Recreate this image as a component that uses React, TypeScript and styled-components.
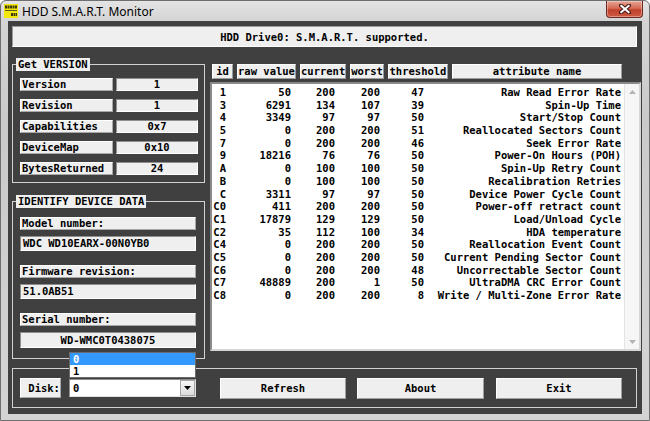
import React from "react";
import styled, { createGlobalStyle } from "styled-components";

const MONO = `"DejaVu Sans Mono", "Liberation Mono", monospace`;

const GlobalStyle = createGlobalStyle`
  html, body { margin: 0; padding: 0; background: #ffffff; }
  body { font-family: ${MONO}; }
  * { box-sizing: border-box; }
`;

const Window = styled.div`
  width: 650px;
  height: 421px;
  display: flex;
  flex-direction: column;
  padding: 0 7px 6px 7px;
  background: linear-gradient(180deg, #e4e4e4 0px, #d4d4d4 20px, #cacaca 120px, #d4d4d4 421px);
  border: 1px solid #6f6f6f;
  border-radius: 6px 6px 0 0;
  overflow: hidden;
`;

const TitleBar = styled.div`
  height: 21px;
  display: flex;
  align-items: flex-start;
  margin: 0 -1px 0 -4px;
`;

const AppIcon = styled.svg`
  width: 14px;
  height: 14px;
  margin: 3px 4px 0 0;
  flex: none;
`;

const TitleText = styled.span`
  font-family: "Noto Sans", "Open Sans", sans-serif;
  font-size: 12px;
  line-height: 14px;
  margin-top: 4px;
  color: #000;
  white-space: nowrap;
`;

const CloseButton = styled.div`
  margin-left: auto;
  width: 37px;
  height: 17px;
  display: flex;
  align-items: center;
  justify-content: center;
  background: linear-gradient(180deg, #e6a595 0%, #d46a56 45%, #c0412c 55%, #cc5a44 100%);
  border: 1px solid #6e2a20;
  border-top: none;
  border-radius: 0 0 4px 4px;
  box-shadow: inset 0 0 0 1px rgba(255, 255, 255, 0.35);
`;

const Client = styled.div`
  flex: 1;
  display: flex;
  flex-direction: column;
  background: #404040;
  padding: 5px 5px 6px 4px;
  color: #000;
  font-family: ${MONO};
  font-weight: bold;
  font-size: 10.5px;
`;

const StatusBox = styled.div`
  height: 21px;
  display: flex;
  align-items: center;
  justify-content: center;
  background: #efefef;
  border: 1px solid;
  border-color: #9a9a9a #ffffff #ffffff #9a9a9a;
  white-space: pre;
`;

const Middle = styled.div`
  display: flex;
  gap: 5px;
  margin-top: 11px;
  height: 302px;
`;

const LeftCol = styled.div`
  width: 193px;
  flex: none;
  display: flex;
  flex-direction: column;
  gap: 12px;
`;

const Group = styled.fieldset<{ $pt: number; $pr: number; $pb: number }>`
  margin: 0;
  min-width: 0;
  padding: ${(p) => p.$pt}px ${(p) => p.$pr}px ${(p) => p.$pb}px 7px;
  border: 1px solid #d2d2d2;
`;

const Legend = styled.legend`
  padding: 0 2px;
  margin-left: -4px;
  background: #efefef;
  line-height: 13px;
  height: 13px;
  white-space: pre;
`;

const Stack = styled.div<{ $gap: number }>`
  display: flex;
  flex-direction: column;
  gap: ${(p) => p.$gap}px;
`;

const InfoRow = styled.div`
  display: flex;
  gap: 3px;
`;

const LabelBox = styled.div<{ $w?: number; $h?: number }>`
  ${(p) => (p.$w ? `width: ${p.$w}px; flex: none;` : "flex: 1;")}
  height: ${(p) => p.$h ?? 13}px;
  line-height: ${(p) => (p.$h ?? 13) - 2}px;
  background: #efefef;
  border: 1px solid;
  border-color: #ffffff #a8a8a8 #a8a8a8 #ffffff;
  padding-left: 1px;
  white-space: pre;
  overflow: hidden;
`;

const ValueBox = styled.div<{ $h?: number; $align?: string }>`
  flex: 1;
  height: ${(p) => p.$h ?? 13}px;
  line-height: ${(p) => (p.$h ?? 13) - 2}px;
  background: #efefef;
  border: 1px solid;
  border-color: #8e8e8e #ffffff #ffffff #8e8e8e;
  text-align: ${(p) => p.$align ?? "center"};
  padding-left: ${(p) => (p.$align === "left" ? 2 : 0)}px;
  white-space: pre;
  overflow: hidden;
`;

const RightCol = styled.div`
  flex: 1;
  margin-right: -4px;
  display: flex;
  flex-direction: column;
  padding-top: 6px;
`;

const HeaderRow = styled.div`
  display: flex;
  gap: 4px;
  margin-left: 2px;
  height: 15px;
`;

const HeaderCell = styled.div<{ $w: number }>`
  width: ${(p) => p.$w}px;
  flex: none;
  height: 15px;
  line-height: 13px;
  text-align: center;
  background: #efefef;
  border: 1px solid;
  border-color: #ffffff #9c9c9c #9c9c9c #ffffff;
  white-space: pre;
`;

const ListBox = styled.div`
  margin-top: 3px;
  height: 269px;
  display: flex;
  background: #ffffff;
  border: 2px solid;
  border-color: #8a8a8a #d6d6d6 #d6d6d6 #8a8a8a;
`;

const Rows = styled.div`
  flex: 1;
  padding-top: 2px;
`;

const Row = styled.div`
  display: grid;
  grid-template-columns: 14px 65px 44px 45px 44px 197px;
  height: 12.7px;
  line-height: 12.7px;
  white-space: pre;
`;

const Cell = styled.span`
  text-align: right;
`;

const ScrollBar = styled.div`
  width: 15px;
  flex: none;
  display: flex;
  flex-direction: column;
  justify-content: space-between;
  background: #f6f6f6;
  border-left: 1px solid #e4e4e4;
`;

const ScrollArrow = styled.div`
  height: 15px;
  display: flex;
  align-items: center;
  justify-content: center;
`;

const BottomGroup = styled.div`
  margin-top: 8px;
  height: 40px;
  display: flex;
  align-items: center;
  padding-left: 7px;
  border: 1px solid #d2d2d2;
`;

const ComboBox = styled.div`
  position: relative;
  margin-left: 8px;
  width: 127px;
  height: 18px;
  display: flex;
  align-items: center;
  background: #ffffff;
  border: 1px solid;
  border-color: #8e8e8e #e0e0e0 #e0e0e0 #8e8e8e;
  padding-left: 3px;
`;

const ComboArrow = styled.div`
  margin-left: auto;
  width: 15px;
  height: 16px;
  display: flex;
  align-items: center;
  justify-content: center;
  background: linear-gradient(180deg, #f6f6f6, #dcdcdc);
  border: 1px solid #a5a5a5;
`;

const DropList = styled.div`
  position: absolute;
  left: -1px;
  right: -1px;
  bottom: calc(100% + 2px);
  background: #ffffff;
  border: 1px solid #6a6a6a;
`;

const DropItem = styled.div<{ $selected?: boolean }>`
  height: 12px;
  line-height: 12px;
  padding-left: 3px;
  background: ${(p) => (p.$selected ? "#3399ff" : "#ffffff")};
  color: ${(p) => (p.$selected ? "#ffffff" : "#000000")};
`;

const Button = styled.div<{ $w: number; $ml: number }>`
  width: ${(p) => p.$w}px;
  margin-left: ${(p) => p.$ml}px;
  height: 21px;
  line-height: 19px;
  text-align: center;
  background: #efefef;
  border: 1px solid;
  border-color: #ffffff #a0a0a0 #a0a0a0 #ffffff;
`;

type Attr = [string, string, string, string, string, string];

const ATTRS: Attr[] = [
  ["1", "50", "200", "200", "47", "Raw Read Error Rate"],
  ["3", "6291", "134", "107", "39", "Spin-Up Time"],
  ["4", "3349", "97", "97", "50", "Start/Stop Count"],
  ["5", "0", "200", "200", "51", "Reallocated Sectors Count"],
  ["7", "0", "200", "200", "46", "Seek Error Rate"],
  ["9", "18216", "76", "76", "50", "Power-On Hours (POH)"],
  ["A", "0", "100", "100", "50", "Spin-Up Retry Count"],
  ["B", "0", "100", "100", "50", "Recalibration Retries"],
  ["C", "3311", "97", "97", "50", "Device Power Cycle Count"],
  ["C0", "411", "200", "200", "50", "Power-off retract count"],
  ["C1", "17879", "129", "129", "50", "Load/Unload Cycle"],
  ["C2", "35", "112", "100", "34", "HDA temperature"],
  ["C4", "0", "200", "200", "50", "Reallocation Event Count"],
  ["C5", "0", "200", "200", "50", "Current Pending Sector Count"],
  ["C6", "0", "200", "200", "48", "Uncorrectable Sector Count"],
  ["C7", "48889", "200", "1", "50", "UltraDMA CRC Error Count"],
  ["C8", "0", "200", "200", "8", "Write / Multi-Zone Error Rate"],
];

const VERSION_ROWS: [string, string][] = [
  ["Version", "1"],
  ["Revision", "1"],
  ["Capabilities", "0x7"],
  ["DeviceMap", "0x10"],
  ["BytesReturned", "24"],
];

const HEADERS: [string, number][] = [
  ["id", 21],
  ["raw value", 59],
  ["current", 46],
  ["worst", 34],
  ["threshold", 60],
  ["attribute name", 170],
];

const Tri = ({ up, color }: { up?: boolean; color: string }) => (
  <svg width="7" height="4" viewBox="0 0 7 4">
    <path d={up ? "M0 4 L3.5 0 L7 4 Z" : "M0 0 L7 0 L3.5 4 Z"} fill={color} />
  </svg>
);

export default function App() {
  return (
    <>
      <GlobalStyle />
      <Window>
        <TitleBar>
          <AppIcon viewBox="0 0 14 14">
            <rect x="0" y="0" width="14" height="14" fill="#f2e60a" />
            <rect x="1" y="1.5" width="2" height="3" fill="#3a3a10" />
            <rect x="3.5" y="1.5" width="2" height="3" fill="#3a3a10" />
            <rect x="6" y="1.5" width="2" height="3" fill="#3a3a10" />
            <rect x="8.5" y="1.5" width="2" height="3" fill="#3a3a10" />
            <rect x="11" y="1.5" width="2" height="3" fill="#3a3a10" />
            <rect x="1" y="6" width="12" height="1" fill="#5a5a20" />
            <rect x="7" y="9" width="2" height="3" fill="#3a3a10" />
            <rect x="9.5" y="9" width="1.5" height="3" fill="#3a3a10" />
            <rect x="11.5" y="9" width="1.5" height="3" fill="#3a3a10" />
          </AppIcon>
          <TitleText>HDD S.M.A.R.T. Monitor</TitleText>
          <CloseButton>
            <svg width="12" height="10" viewBox="0 0 12 10">
              <path d="M2 1.5 L10 8.5 M10 1.5 L2 8.5" stroke="#4a1a14" strokeWidth="4" strokeLinecap="square" />
              <path d="M2.3 1.8 L9.7 8.2 M9.7 1.8 L2.3 8.2" stroke="#ffffff" strokeWidth="2" strokeLinecap="square" />
            </svg>
          </CloseButton>
        </TitleBar>
        <Client>
          <StatusBox>HDD Drive0: S.M.A.R.T. supported.</StatusBox>
          <Middle>
            <LeftCol>
              <Group $pt={7} $pr={6} $pb={7}>
                <Legend>Get VERSION</Legend>
                <Stack $gap={8}>
                  {VERSION_ROWS.map(([k, v]) => (
                    <InfoRow key={k}>
                      <LabelBox $w={93}>{k}</LabelBox>
                      <ValueBox>{v}</ValueBox>
                    </InfoRow>
                  ))}
                </Stack>
              </Group>
              <Group $pt={9} $pr={8} $pb={10}>
                <Legend>IDENTIFY DEVICE DATA</Legend>
                <Stack $gap={14}>
                  <Stack $gap={6}>
                    <LabelBox>Model number:</LabelBox>
                    <ValueBox $h={15} $align="left">WDC WD10EARX-00N0YB0</ValueBox>
                  </Stack>
                  <Stack $gap={6}>
                    <LabelBox>Firmware revision:</LabelBox>
                    <ValueBox $h={15} $align="left">51.0AB51</ValueBox>
                  </Stack>
                  <Stack $gap={6}>
                    <LabelBox>Serial number:</LabelBox>
                    <ValueBox $h={16}>WD-WMC0T0438075</ValueBox>
                  </Stack>
                </Stack>
              </Group>
            </LeftCol>
            <RightCol>
              <HeaderRow>
                {HEADERS.map(([t, w]) => (
                  <HeaderCell key={t} $w={w}>
                    {t}
                  </HeaderCell>
                ))}
              </HeaderRow>
              <ListBox>
                <Rows>
                  {ATTRS.map((a) => (
                    <Row key={a[0]}>
                      {a.map((c, i) => (
                        <Cell key={i}>{c}</Cell>
                      ))}
                    </Row>
                  ))}
                </Rows>
                <ScrollBar>
                  <ScrollArrow>
                    <Tri up color="#b4b4b4" />
                  </ScrollArrow>
                  <ScrollArrow>
                    <Tri color="#b4b4b4" />
                  </ScrollArrow>
                </ScrollBar>
              </ListBox>
            </RightCol>
          </Middle>
          <BottomGroup>
            <LabelBox $w={41} $h={20}>
              {" Disk:"}
            </LabelBox>
            <ComboBox>
              0
              <ComboArrow>
                <Tri color="#000000" />
              </ComboArrow>
              <DropList>
                <DropItem $selected>0</DropItem>
                <DropItem>1</DropItem>
              </DropList>
            </ComboBox>
            <Button $w={126} $ml={24}>Refresh</Button>
            <Button $w={127} $ml={11}>About</Button>
            <Button $w={126} $ml={12}>Exit</Button>
          </BottomGroup>
        </Client>
      </Window>
    </>
  );
}
